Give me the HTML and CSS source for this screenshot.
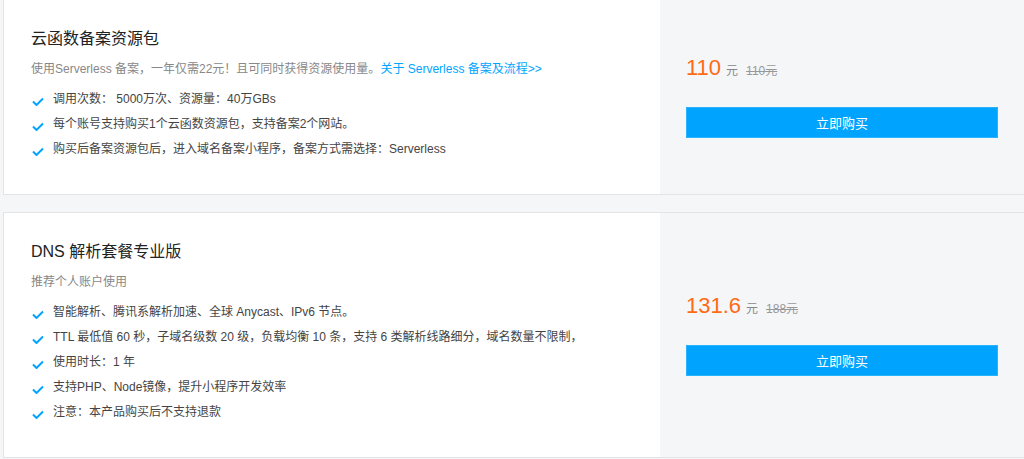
FILE: index.html
```html
<!DOCTYPE html>
<html lang="zh-CN">
<head>
<meta charset="UTF-8">
<meta name="viewport" content="width=device-width, initial-scale=1.0">
<title>资源包购买</title>
<link rel="stylesheet" href="styles.css">
</head>
<body>
<div class="list">

  <div class="card">
    <div class="info">
      <h2 class="title">云函数备案资源包</h2>
      <p class="desc">使用Serverless 备案，一年仅需22元！且可同时获得资源使用量。<a href="#" class="link">关于 Serverless 备案及流程&gt;&gt;</a></p>
      <ul class="features">
        <li><svg class="check" viewBox="0 0 12 9"><path d="M1 4.5 L4.5 8 L11 1.5"/></svg>调用次数： 5000万次、资源量：40万GBs</li>
        <li><svg class="check" viewBox="0 0 12 9"><path d="M1 4.5 L4.5 8 L11 1.5"/></svg>每个账号支持购买1个云函数资源包，支持备案2个网站。</li>
        <li><svg class="check" viewBox="0 0 12 9"><path d="M1 4.5 L4.5 8 L11 1.5"/></svg>购买后备案资源包后，进入域名备案小程序，备案方式需选择：Serverless</li>
      </ul>
    </div>
    <div class="buy">
      <div class="price"><span class="now">110</span><span class="unit">元</span><del class="old">110元</del></div>
      <button class="btn">立即购买</button>
    </div>
  </div>

  <div class="card">
    <div class="info">
      <h2 class="title">DNS 解析套餐专业版</h2>
      <p class="desc">推荐个人账户使用</p>
      <ul class="features">
        <li><svg class="check" viewBox="0 0 12 9"><path d="M1 4.5 L4.5 8 L11 1.5"/></svg>智能解析、腾讯系解析加速、全球 Anycast、IPv6 节点。</li>
        <li><svg class="check" viewBox="0 0 12 9"><path d="M1 4.5 L4.5 8 L11 1.5"/></svg>TTL 最低值 60 秒，子域名级数 20 级，负载均衡 10 条，支持 6 类解析线路细分，域名数量不限制，</li>
        <li><svg class="check" viewBox="0 0 12 9"><path d="M1 4.5 L4.5 8 L11 1.5"/></svg>使用时长：1 年</li>
        <li><svg class="check" viewBox="0 0 12 9"><path d="M1 4.5 L4.5 8 L11 1.5"/></svg>支持PHP、Node镜像，提升小程序开发效率</li>
        <li><svg class="check" viewBox="0 0 12 9"><path d="M1 4.5 L4.5 8 L11 1.5"/></svg>注意：本产品购买后不支持退款</li>
      </ul>
    </div>
    <div class="buy">
      <div class="price"><span class="now">131.6</span><span class="unit">元</span><del class="old">188元</del></div>
      <button class="btn">立即购买</button>
    </div>
  </div>

</div>
</body>
</html>
```

FILE: styles.css
```css
body {
  margin: 0;
  background-color: #f5f6f8;
  font-family: 'Liberation Sans', 'Noto Sans CJK SC', sans-serif;
  color: #333;
  overflow: hidden;
}
.list {
  margin-top: -1px;
  padding-left: 3px;
}
.card {
  display: flex;
  width: 1060px;
  margin-bottom: 17px;
  border: 1px solid #e3e4e6;
  background: #fff;
}
.info {
  width: 656px;
  padding: 27px 0 32px 27px;
  box-sizing: border-box;
}
.title {
  margin: 0;
  font-size: 16px;
  line-height: 24px;
  font-weight: normal;
  color: #222;
}
.desc {
  margin: 8px 0 0;
  font-size: 12px;
  line-height: 20px;
  color: #888;
}
.link {
  color: #00a4ff;
  text-decoration: none;
}
.features {
  list-style: none;
  margin: 8px 0 0;
  padding: 0;
}
.features li {
  display: flex;
  align-items: center;
  font-size: 12px;
  line-height: 25px;
  color: #444;
}
.check {
  width: 12px;
  height: 9px;
  margin: 3px 9px 0 1px;
  fill: none;
  stroke: #00a4ff;
  stroke-width: 2;
}
.buy {
  flex: 1;
  display: flex;
  flex-direction: column;
  justify-content: center;
  gap: 21px;
  padding: 0 0 4px 26px;
  background: #f5f6f8;
}
.price {
  line-height: 30px;
  white-space: nowrap;
}
.now {
  font-size: 22px;
  color: #ff6a16;
}
.unit {
  margin-left: 5px;
  font-size: 12px;
  color: #888;
}
.old {
  margin-left: 8px;
  font-size: 12px;
  color: #999;
}
.btn {
  width: 312px;
  height: 31px;
  padding: 0;
  border: 1px solid #2ab2ff;
  background-color: #00a4ff;
  color: #fff;
  font-family: 'Liberation Sans', 'Noto Sans CJK SC', sans-serif;
  font-size: 13px;
  cursor: pointer;
}
.btn:hover {
  background-color: #0095e8;
}
```
